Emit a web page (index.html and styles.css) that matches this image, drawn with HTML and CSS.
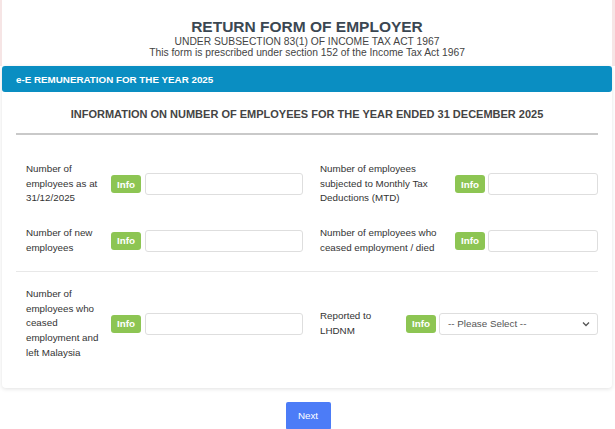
FILE: index.html
```html
<!DOCTYPE html>
<html lang="en">
<head>
<meta charset="utf-8">
<title>Return Form of Employer</title>
<link rel="stylesheet" href="styles.css">
</head>
<body>
<header class="top">
  <h1 class="title">RETURN FORM OF EMPLOYER</h1>
  <p class="sub">UNDER SUBSECTION 83(1) OF INCOME TAX ACT 1967</p>
  <p class="sub">This form is prescribed under section 152 of the Income Tax Act 1967</p>
</header>
<main class="card">
  <div class="card-header">e-E REMUNERATION FOR THE YEAR 2025</div>
  <div class="card-body">
    <h2 class="heading">INFORMATION ON NUMBER OF EMPLOYEES FOR THE YEAR ENDED 31 DECEMBER 2025</h2>
    <section class="section first">
      <div class="row">
        <div class="half left">
          <label class="label">Number of employees as at 31/12/2025</label>
          <span class="info">Info</span>
          <input class="field" type="text">
        </div>
        <div class="half right">
          <label class="label wide">Number of employees subjected to Monthly Tax Deductions (MTD)</label>
          <span class="info">Info</span>
          <input class="field" type="text">
        </div>
      </div>
      <div class="row">
        <div class="half left">
          <label class="label">Number of new employees</label>
          <span class="info">Info</span>
          <input class="field" type="text">
        </div>
        <div class="half right">
          <label class="label wide">Number of employees who ceased employment / died</label>
          <span class="info">Info</span>
          <input class="field" type="text">
        </div>
      </div>
    </section>
    <section class="section last">
      <div class="row">
        <div class="half left">
          <label class="label">Number of employees who ceased employment and left Malaysia</label>
          <span class="info">Info</span>
          <input class="field" type="text">
        </div>
        <div class="half right">
          <label class="label narrow">Reported to LHDNM</label>
          <span class="info">Info</span>
          <div class="select">
            <span>-- Please Select --</span>
            <svg class="chev" width="8" height="6" viewBox="0 0 8 6"><path d="M1 1.5 L4 4.5 L7 1.5" fill="none" stroke="#555" stroke-width="1.3"/></svg>
          </div>
        </div>
      </div>
    </section>
  </div>
</main>
<div class="actions">
  <button class="next" type="button">Next</button>
</div>
</body>
</html>
```

FILE: styles.css
```css
* { box-sizing: border-box; }
body {
  margin: 0;
  background: #fff;
  font-family: "Liberation Sans", Arial, sans-serif;
  color: #333;
}
.top {
  height: 66px;
  padding-top: 17.5px;
  text-align: center;
  border-left: 2px solid #f6e5e5;
  border-right: 3px solid #f6e5e5;
}
.title {
  margin: 0;
  font-size: 15.5px;
  line-height: 18.6px;
  font-weight: bold;
  color: #3b4752;
}
.sub {
  margin: 0;
  font-size: 10.3px;
  line-height: 11px;
  color: #444;
}
.card {
  margin: 0 3px 0 2px;
  background: #fff;
  border-radius: 4px;
  box-shadow: 0 1px 4px rgba(0,0,0,0.12);
}
.card-header {
  height: 26px;
  padding-left: 14px;
  display: flex;
  align-items: center;
  background: #0a8ec2;
  color: #fff;
  font-size: 9.8px;
  font-weight: bold;
  border-radius: 3px;
}
.card-body {
  padding: 0 14px;
}
.heading {
  margin: 0;
  padding: 15px 0 12px;
  line-height: 14px;
  font-size: 11px;
  font-weight: bold;
  text-align: center;
  color: #444;
  border-bottom: 2px solid #c9c9c9;
}
.section {
  display: flex;
  flex-direction: column;
  gap: 20px;
}
.section.first {
  padding: 27px 0 15px;
  border-bottom: 1px solid #e8e8e8;
}
.section.last {
  padding: 15.5px 0 27px;
}
.row {
  display: flex;
  padding-left: 10px;
  gap: 17px;
}
.half {
  display: flex;
  align-items: center;
  min-width: 0;
}
.half.left { width: 277px; flex: none; }
.half.right { width: 278px; flex: none; }
.label {
  font-size: 9.8px;
  line-height: 14.7px;
  color: #333;
  width: 80px;
  flex: none;
  margin-right: 5px;
}
.label.wide { width: 130px; }
.label.narrow { width: 81px; }
.info {
  flex: none;
  width: 30px;
  height: 18px;
  display: flex;
  align-items: center;
  justify-content: center;
  background: #8dc553;
  color: #fff;
  font-size: 9.8px;
  font-weight: bold;
  border-radius: 3px;
  margin-right: 4px;
}
.right .info { margin-right: 3px; }
.field {
  flex: 1 1 0;
  width: 0;
  min-width: 0;
  height: 22px;
  margin: 0;
  border: 1px solid #dedede;
  border-radius: 3px;
  background: #fff;
  font: inherit;
}
.select {
  flex: 1 1 0;
  min-width: 0;
  height: 22px;
  border: 1px solid #dedede;
  border-radius: 3px;
  background: #fff;
  display: flex;
  align-items: center;
  justify-content: space-between;
  padding: 0 7px 0 8px;
  font-size: 9.8px;
  color: #555;
}
.chev { display: block; }
.actions {
  display: flex;
  justify-content: center;
  padding-top: 14px;
  padding-left: 1px;
}
.next {
  width: 45px;
  height: 28px;
  border: none;
  border-radius: 2px;
  background: #4c7cf7;
  color: #fff;
  font-family: "Liberation Sans", Arial, sans-serif;
  font-size: 9.8px;
  padding: 0;
}
```
